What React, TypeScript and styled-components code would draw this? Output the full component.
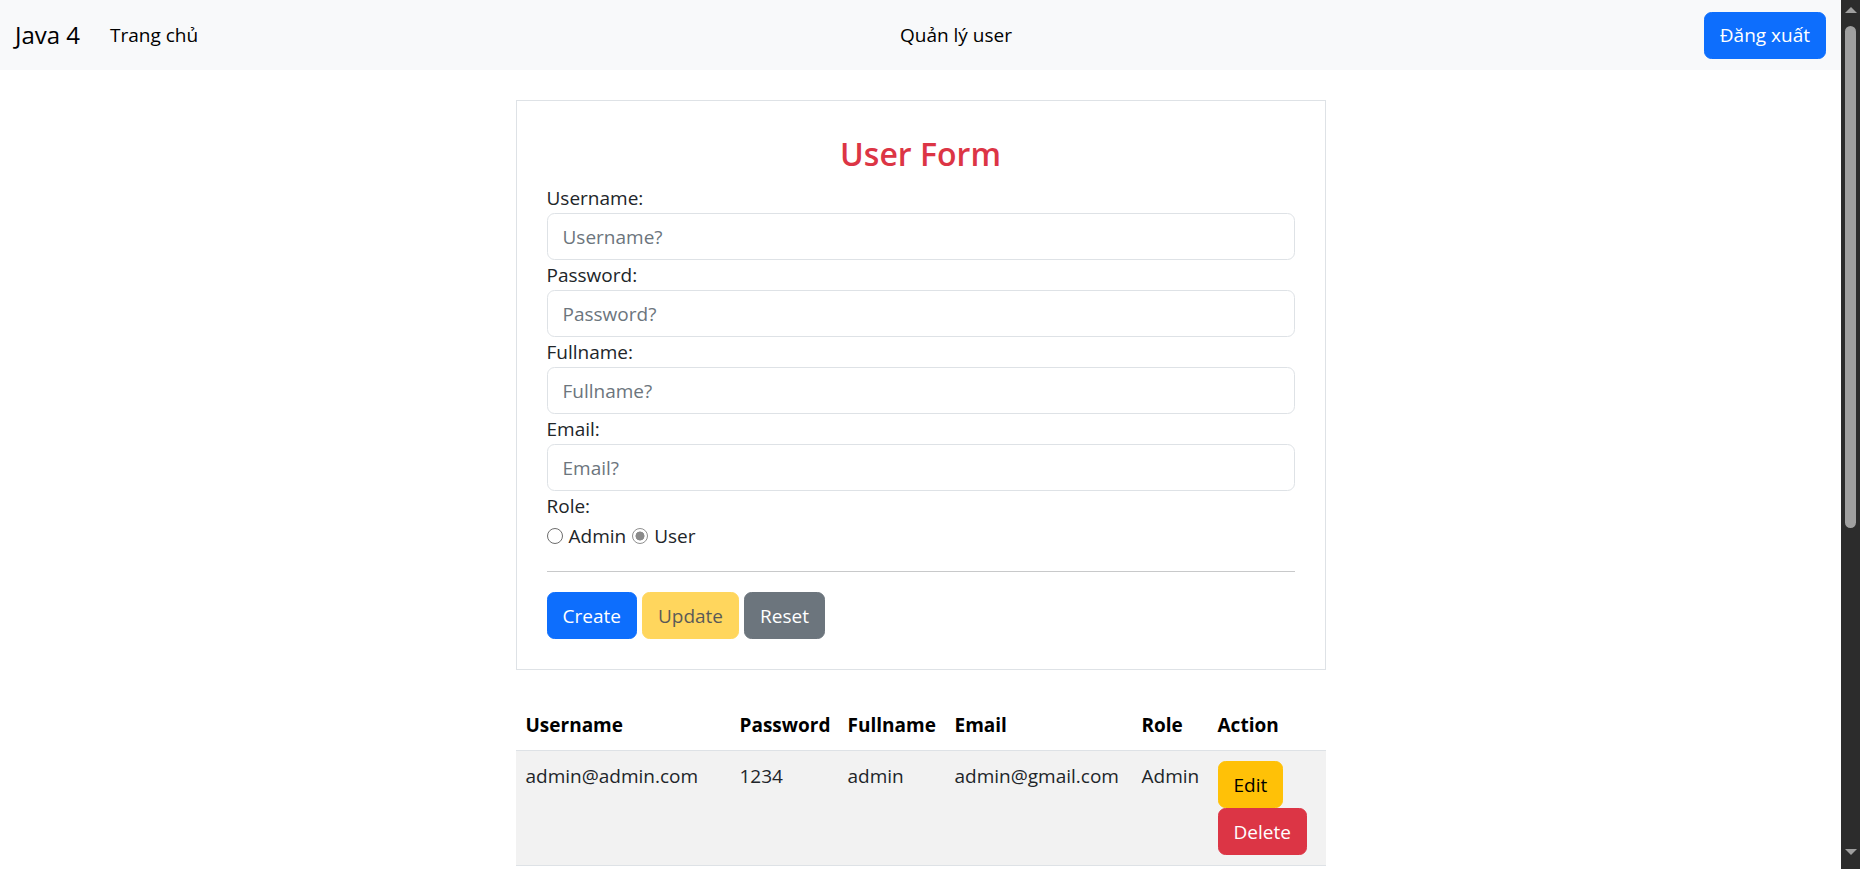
import React from "react";
import styled, { createGlobalStyle } from "styled-components";

const GlobalStyle = createGlobalStyle`
  html, body {
    margin: 0;
    padding: 0;
    height: 100%;
    overflow: hidden;
  }
  body {
    font-family: "Open Sans", "Noto Sans", sans-serif;
    font-size: 19px;
    line-height: 30px;
    color: #212529;
    background: #ffffff;
  }
  *, *::before, *::after { box-sizing: border-box; }
`;

const Window = styled.div`
  display: flex;
  height: 100vh;
  background: #ffffff;
`;

const PageContent = styled.div`
  flex: 1;
  min-width: 0;
  overflow: hidden;
`;

/* Drawing of the browser's vertical scrollbar */
const ScrollTrack = styled.div`
  width: 19px;
  flex: none;
  background: #2c2c2c;
  display: flex;
  flex-direction: column;
`;

const ScrollArrow = styled.div<{ $down?: boolean; $h: number }>`
  height: ${(p) => p.$h}px;
  flex: none;
  display: flex;
  justify-content: center;
  align-items: center;

  &::after {
    content: "";
    width: 0;
    height: 0;
    border-left: 6px solid transparent;
    border-right: 6px solid transparent;
    ${(p) =>
      p.$down
        ? "border-top: 6px solid #9f9f9f;"
        : "border-bottom: 6px solid #9f9f9f;"}
  }
`;

const ScrollThumb = styled.div`
  margin: 6px 4px 0;
  height: 502px;
  border-radius: 6px;
  background: #9f9f9f;
  flex: none;
`;

const ScrollSpacer = styled.div`
  flex: 1;
`;

const NavBar = styled.nav`
  height: 70px;
  background: #f8f9fa;
  display: flex;
  align-items: center;
  padding: 0 15px;
`;

const Brand = styled.a`
  font-size: 24px;
  line-height: 36px;
  color: #000000;
  text-decoration: none;
  margin-right: 20px;
`;

const NavLink = styled.a<{ $center?: boolean }>`
  font-size: 19px;
  line-height: 30px;
  padding: 0 10px;
  color: #000000;
  text-decoration: none;
  margin: ${(p) => (p.$center ? "0 auto" : "0")};
`;

const Button = styled.button<{ $bg: string; $fg: string; $disabled?: boolean }>`
  font-family: inherit;
  font-size: 19px;
  line-height: 30px;
  padding: 7.5px 15px;
  border: 1px solid ${(p) => p.$bg};
  border-radius: 7.5px;
  background: ${(p) => p.$bg};
  color: ${(p) => p.$fg};
  opacity: ${(p) => (p.$disabled ? 0.65 : 1)};
  cursor: pointer;
  white-space: nowrap;
`;

const Main = styled.main`
  width: 810px;
  margin: 30px auto 0;
`;

const Card = styled.section`
  border: 1px solid #dee2e6;
  padding: 30px;
`;

const Title = styled.h4`
  margin: 5px 0 11px;
  font-size: 32px;
  line-height: 36px;
  font-weight: 600;
  color: #dc3545;
  text-align: center;
`;

const Label = styled.label`
  display: block;
  font-size: 19px;
  line-height: 30px;
`;

const Input = styled.input`
  display: block;
  width: 100%;
  height: 47px;
  padding: 7px 15px;
  font-family: inherit;
  font-size: 19px;
  line-height: 30px;
  color: #212529;
  border: 1px solid #dee2e6;
  border-radius: 7.5px;
  background: #ffffff;
  outline: none;

  &::placeholder {
    color: #6c757d;
    opacity: 1;
  }
`;

const RadioRow = styled.div`
  display: flex;
  align-items: center;
  height: 30px;
`;

const RadioOption = styled.label`
  display: flex;
  align-items: center;
  gap: 6px;
  margin-right: 6px;
`;

const Radio = styled.input`
  appearance: none;
  -webkit-appearance: none;
  margin: 0;
  width: 16px;
  height: 16px;
  border-radius: 50%;
  border: 1px solid #6d6d6d;
  background: #ffffff;

  &:checked {
    border-color: #8f8f8f;
    background: radial-gradient(circle, #8a8a8a 0 4.2px, #ffffff 4.8px);
  }
`;

const Divider = styled.hr`
  margin: 20px 0;
  border: 0;
  border-top: 1px solid #c8c9ca;
`;

const ButtonRow = styled.div`
  display: flex;
  gap: 5px;
`;

const Table = styled.table`
  width: 810px;
  margin-top: 30px;
  border-collapse: collapse;
  table-layout: fixed;
`;

const Th = styled.th`
  text-align: left;
  font-weight: 700;
  font-size: 19px;
  line-height: 30px;
  padding: 10px;
  border-bottom: 1px solid #dee2e6;
  color: #000000;
  white-space: nowrap;
`;

const Td = styled.td`
  vertical-align: top;
  font-size: 19px;
  line-height: 30px;
  padding: 10px;
  background: #f2f2f2;
  border-bottom: 1px solid #dee2e6;
  color: #212529;
  white-space: nowrap;
`;

const ActionStack = styled.div`
  display: flex;
  flex-direction: column;
  align-items: flex-start;
`;

const columns = [214, 108, 107, 187, 76, 118];

const fields = [
  { label: "Username:", placeholder: "Username?", type: "text" },
  { label: "Password:", placeholder: "Password?", type: "password" },
  { label: "Fullname:", placeholder: "Fullname?", type: "text" },
  { label: "Email:", placeholder: "Email?", type: "email" },
];

const users = [
  {
    username: "admin@admin.com",
    password: "1234",
    fullname: "admin",
    email: "admin@gmail.com",
    role: "Admin",
  },
];

export default function App() {
  return (
    <>
      <GlobalStyle />
      <Window>
        <PageContent>
          <NavBar>
            <Brand href="#">Java 4</Brand>
            <NavLink href="#">Trang chủ</NavLink>
            <NavLink href="#" $center>
              Quản lý user
            </NavLink>
            <Button $bg="#0d6efd" $fg="#ffffff">
              Đăng xuất
            </Button>
          </NavBar>
          <Main>
            <Card>
              <Title>User Form</Title>
              {fields.map((f) => (
                <div key={f.label}>
                  <Label>{f.label}</Label>
                  <Input type={f.type} placeholder={f.placeholder} />
                </div>
              ))}
              <Label>Role:</Label>
              <RadioRow>
                <RadioOption>
                  <Radio type="radio" name="role" />
                  Admin
                </RadioOption>
                <RadioOption>
                  <Radio type="radio" name="role" defaultChecked />
                  User
                </RadioOption>
              </RadioRow>
              <Divider />
              <ButtonRow>
                <Button $bg="#0d6efd" $fg="#ffffff">Create</Button>
                <Button $bg="#ffc107" $fg="#000000" $disabled>Update</Button>
                <Button $bg="#6c757d" $fg="#ffffff">Reset</Button>
              </ButtonRow>
            </Card>
            <Table>
              <colgroup>
                {columns.map((w, i) => (
                  <col key={i} style={{ width: w }} />
                ))}
              </colgroup>
              <thead>
                <tr>
                  <Th>Username</Th>
                  <Th>Password</Th>
                  <Th>Fullname</Th>
                  <Th>Email</Th>
                  <Th>Role</Th>
                  <Th>Action</Th>
                </tr>
              </thead>
              <tbody>
                {users.map((u) => (
                  <tr key={u.username}>
                    <Td>{u.username}</Td>
                    <Td>{u.password}</Td>
                    <Td>{u.fullname}</Td>
                    <Td>{u.email}</Td>
                    <Td>{u.role}</Td>
                    <Td>
                      <ActionStack>
                        <Button $bg="#ffc107" $fg="#000000">Edit</Button>
                        <Button $bg="#dc3545" $fg="#ffffff">Delete</Button>
                      </ActionStack>
                    </Td>
                  </tr>
                ))}
              </tbody>
            </Table>
          </Main>
        </PageContent>
        <ScrollTrack aria-hidden="true">
          <ScrollArrow $h={20} />
          <ScrollThumb />
          <ScrollSpacer />
          <ScrollArrow $h={34} $down />
        </ScrollTrack>
      </Window>
    </>
  );
}
